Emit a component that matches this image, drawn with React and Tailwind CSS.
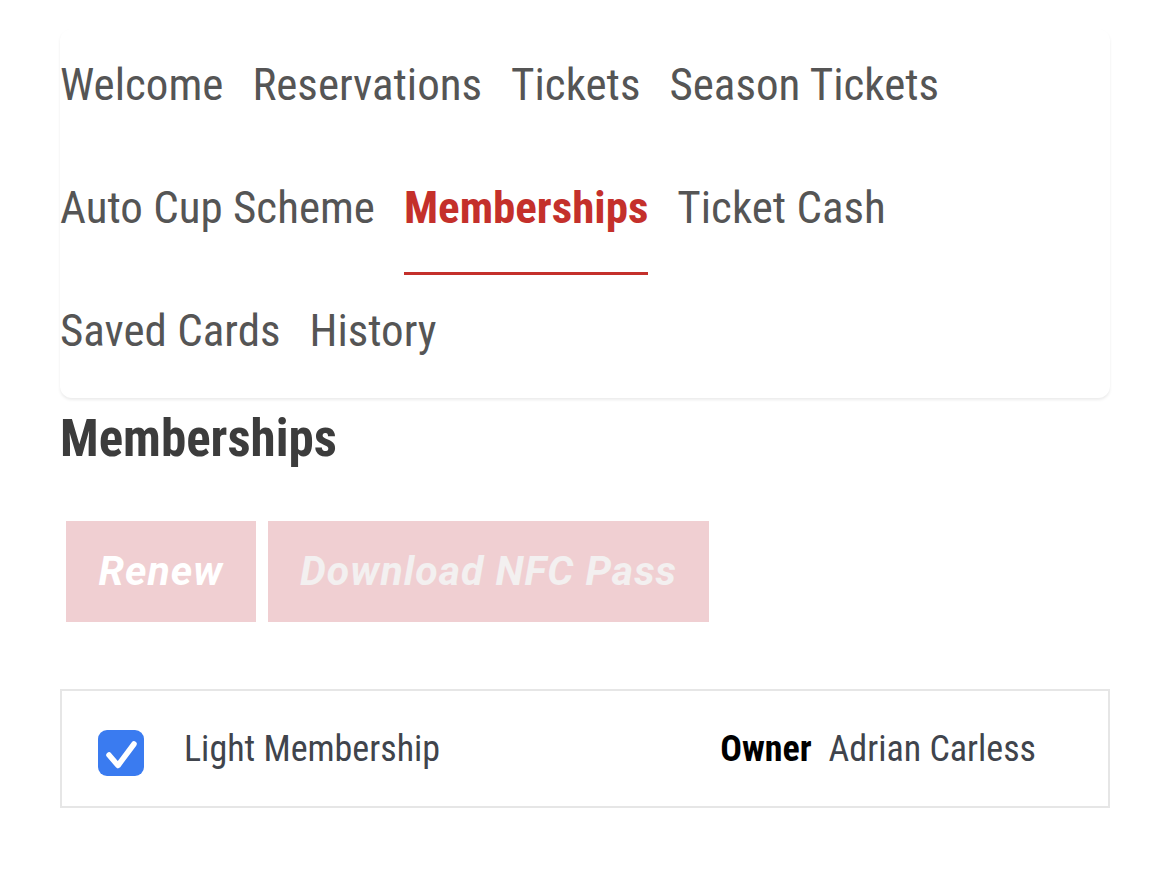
import React from 'react';

const tabs = [
  ['Welcome', 'Reservations', 'Tickets', 'Season Tickets'],
  ['Auto Cup Scheme', 'Memberships', 'Ticket Cash'],
  ['Saved Cards', 'History'],
];

const active = 'Memberships';

const App = () => {
  return (
    <div className="min-h-screen bg-white font-['Roboto',sans-serif] [font-stretch:75%] px-[60px] pb-10 w-[1170px]">
      {/* Tabs card */}
      <div className="mt-[29px] w-[1050px] rounded-xl bg-white shadow-[0_2px_3px_rgba(0,0,0,0.08)]">
        {tabs.map((row, i) => (
          <div key={i} className="flex gap-[29px]">
            {row.map((t) => (
              <div
                key={t}
                className={`h-[123px] pt-[32px] border-b-[3px] ${
                  t === active ? 'border-[#c4302b] text-[#c4302b] font-bold' : 'border-transparent text-[#555555]'
                }`}
              >
                <span className="block text-[45px] leading-[48px]">{t}</span>
              </div>
            ))}
          </div>
        ))}
      </div>

      {/* Heading */}
      <h1 className="mt-[13px] text-[51px] leading-[56px] font-bold text-[#3c3c3c]">Memberships</h1>

      {/* Buttons */}
      <div className="mt-[54px] ml-[6px] flex gap-[12px]">
        <button className="w-[190px] h-[101px] bg-[#f0cfd2] text-white text-[41px] font-bold italic tracking-[1px] [font-stretch:91%]">Renew</button>
        <button className="w-[441px] h-[101px] bg-[#f0cfd2] text-[#f3f0f0] text-[41px] font-bold italic tracking-[1px] [font-stretch:91%]">Download NFC Pass</button>
      </div>

      {/* Membership row */}
      <div className="mt-[67px] w-[1050px] h-[119px] border-2 border-[#e6e6e6] flex items-center pl-[36px] pr-[72px]">
        <div className="w-[46px] h-[46px] rounded-[9px] bg-[#3a7bf0] mt-[8px]">
          <svg width="46" height="46" viewBox="0 0 46 46" fill="none" stroke="white" strokeWidth="5.5" strokeLinecap="round" strokeLinejoin="round">
            <path d="M11 25l9 10.5L36 14" />
          </svg>
        </div>
        <span className="ml-[40px] text-[36px] text-[#40444c]">Light Membership</span>
        <div className="ml-auto flex items-baseline gap-[17px]">
          <span className="text-[36px] font-bold text-black">Owner</span>
          <span className="text-[36px] text-[#40444c]">Adrian Carless</span>
        </div>
      </div>
    </div>
  );
};

export default App;
